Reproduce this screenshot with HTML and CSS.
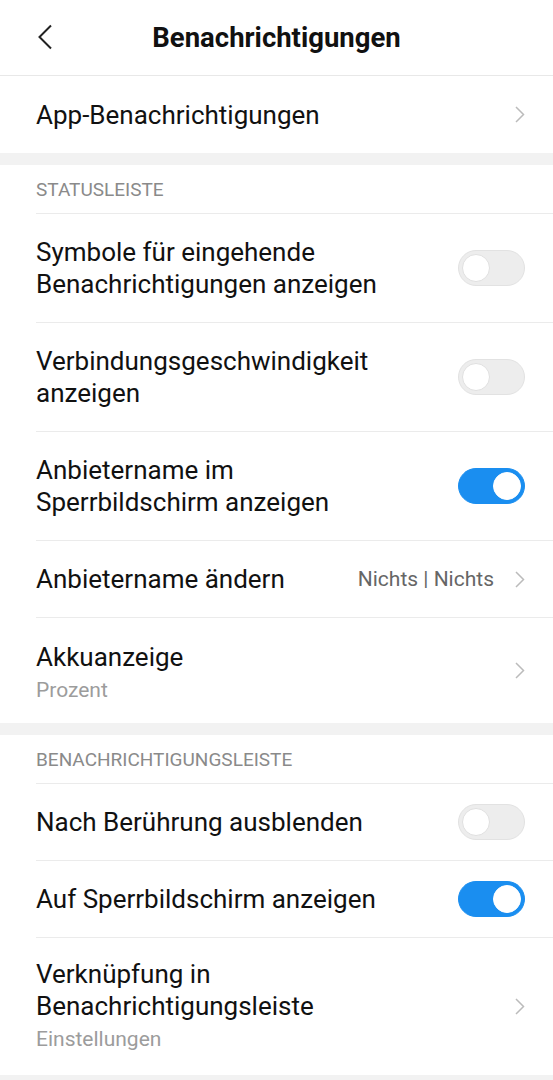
FILE: index.html
```html
<!DOCTYPE html>
<html lang="de">
<head>
  <meta charset="UTF-8">
  <meta name="viewport" content="width=device-width, initial-scale=1.0">
  <title>Benachrichtigungen</title>
  <link rel="stylesheet" href="styles.css">
</head>
<body>
  <header class="topbar">
    <svg class="back" width="16" height="26" viewBox="0 0 16 26">
      <path d="M14 1.5 L2.5 13 L14 24.5" fill="none" stroke="#222" stroke-width="2"/>
    </svg>
    <h1>Benachrichtigungen</h1>
  </header>

  <div class="row single first">
    <div class="label"><div class="title">App-Benachrichtigungen</div></div>
    <span class="chev"></span>
  </div>

  <div class="gap"></div>

  <div class="section">Statusleiste</div>
  <div class="row double">
    <div class="label"><div class="title">Symbole für eingehende<br>Benachrichtigungen anzeigen</div></div>
    <span class="toggle"></span>
  </div>
  <div class="row double">
    <div class="label"><div class="title">Verbindungsgeschwindigkeit<br>anzeigen</div></div>
    <span class="toggle"></span>
  </div>
  <div class="row double">
    <div class="label"><div class="title">Anbietername im<br>Sperrbildschirm anzeigen</div></div>
    <span class="toggle on"></span>
  </div>
  <div class="row single">
    <div class="label"><div class="title">Anbietername ändern</div></div>
    <span class="value">Nichts | Nichts</span>
    <span class="chev"></span>
  </div>
  <div class="row sub">
    <div class="label">
      <div class="title">Akkuanzeige</div>
      <div class="hint">Prozent</div>
    </div>
    <span class="chev"></span>
  </div>

  <div class="gap"></div>

  <div class="section">Benachrichtigungsleiste</div>
  <div class="row single">
    <div class="label"><div class="title">Nach Berührung ausblenden</div></div>
    <span class="toggle"></span>
  </div>
  <div class="row single">
    <div class="label"><div class="title">Auf Sperrbildschirm anzeigen</div></div>
    <span class="toggle on"></span>
  </div>
  <div class="row triple">
    <div class="label">
      <div class="title">Verknüpfung in<br>Benachrichtigungsleiste</div>
      <div class="hint">Einstellungen</div>
    </div>
    <span class="chev"></span>
  </div>

  <div class="gap"></div>
</body>
</html>
```

FILE: styles.css
```css
body {
  margin: 0;
  padding: 0;
  background: #fff;
  font-family: Roboto, "Noto Sans", Arial, sans-serif;
  color: #111;
}
.topbar {
  height: 75px;
  border-bottom: 1px solid #e8e8e8;
  display: flex;
  align-items: center;
  justify-content: center;
  position: relative;
}
.topbar h1 {
  margin: 0;
  font-size: 27.5px;
  font-weight: 700;
  color: #111;
}
.back {
  position: absolute;
  left: 37px;
  top: 24px;
}
.row {
  display: flex;
  align-items: center;
  margin-left: 36px;
  padding-right: 28px;
  border-top: 1px solid #ebebeb;
  box-sizing: border-box;
}
.row.first {
  margin-left: 0;
  padding-left: 36px;
  border-top: none;
}
.row.single { height: 77px; }
.row.double { height: 109px; }
.row.sub { height: 106px; }
.row.triple { height: 138px; }
.row.sub .label { padding-top: 6px; }
.label {
  flex: 1;
  min-width: 0;
  padding-right: 20px;
  white-space: nowrap;
}
.title {
  font-size: 26px;
  line-height: 32px;
  color: #111;
}
.hint {
  font-size: 21px;
  line-height: 34px;
  color: #9c9c9c;
}
.value {
  font-size: 21px;
  color: #666;
  margin-right: 21px;
  white-space: nowrap;
}
.chev {
  width: 10px;
  height: 17px;
  flex: none;
  background: no-repeat center/10px 17px url("data:image/svg+xml;utf8,<svg xmlns='http://www.w3.org/2000/svg' width='10' height='17' viewBox='0 0 10 17'><path d='M1 1 L8.5 8.5 L1 16' fill='none' stroke='%23bbbbbb' stroke-width='1.5'/></svg>");
}
.gap {
  height: 12px;
  background: #f2f2f2;
}
.section {
  height: 48px;
  margin-left: 36px;
  display: flex;
  align-items: center;
  font-size: 19px;
  text-transform: uppercase;
  color: #8a8a8a;
}
.toggle {
  flex: none;
  width: 67px;
  height: 36px;
  border-radius: 18px;
  background: #ededed;
  border: 1px solid #e2e2e2;
  box-sizing: border-box;
  position: relative;
}
.toggle::after {
  content: "";
  position: absolute;
  left: 3px;
  top: 3px;
  width: 28px;
  height: 28px;
  border-radius: 50%;
  background: #fff;
  border: 1px solid #e0e0e0;
  box-sizing: border-box;
}
.toggle.on {
  background: #1a8ef0;
  border-color: #1a8ef0;
}
.toggle.on::after {
  left: auto;
  right: 3px;
  border-color: #fff;
}
```
